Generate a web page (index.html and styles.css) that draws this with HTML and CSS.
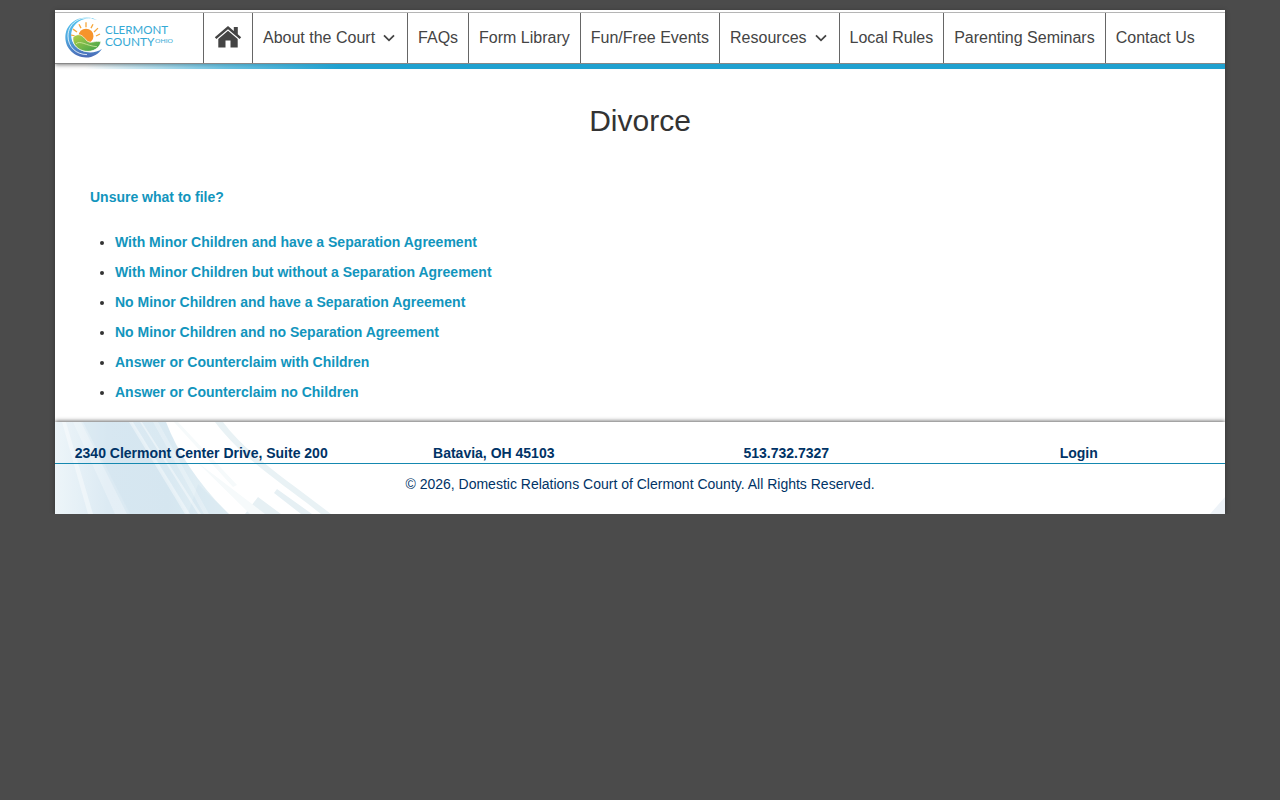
FILE: index.html
```html
<!DOCTYPE html>
<html lang="en">
<head>
  <meta charset="utf-8">
  <title>Divorce</title>
  <link rel="stylesheet" href="styles.css">
</head>
<body>
  <div class="container">
    <div class="header">
      <ul class="menu">
        <li class="logo">
          <a href="#">
            <svg width="110" height="44" viewBox="0 0 110 44">
              <defs>
                <linearGradient id="ring" x1="0" y1="0" x2="0" y2="1">
                  <stop offset="0" stop-color="#55c4ee"/>
                  <stop offset=".55" stop-color="#4fa6de"/>
                  <stop offset="1" stop-color="#4b69b5"/>
                </linearGradient>
                <linearGradient id="hill" x1="0" y1="0" x2="1" y2="1">
                  <stop offset="0" stop-color="#b5cf45"/>
                  <stop offset="1" stop-color="#38a04c"/>
                </linearGradient>
              </defs>
              <g transform="translate(0 -.6) scale(1 .98)">
                <path fill="url(#ring)" d="M34 6C25-1 8 1 2 14C-4 29 7 43 21 43C28 43 34 39 37 34C29 40 17 39 10 31C3 22 6 10 16 5C22 2 29 3 34 6z"/>
                <path fill="none" stroke="#fff" stroke-width=".8" d="M27 3.500C14 0 3 9 3 21C3 32 11 40 22 40"/>
                <path fill="none" stroke="#f6a63a" stroke-width="1.300" d="M21 12V7M16 13L14 9M12 17L8 14M10 21L6 20M26 13L28 9M29 17L33 13M31 21L35 19"/>
                <circle cx="21" cy="21" r="7.500" fill="#f7942b"/>
                <path fill="url(#hill)" stroke="#fff" stroke-width=".7" d="M8 22C14 17 18 21 21 25C25 30 30 25 36 27C34 36 24 38 18 36C11 34 7 28 8 22z"/>
                <path fill="none" stroke="#d8e9a5" stroke-width=".8" d="M11 29C15 25 21 31 32 32"/>
              </g>
              <text class="logo-text" x="40" y="18.200" textLength="63" lengthAdjust="spacingAndGlyphs">CLERMONT</text>
              <text class="logo-text" x="40" y="29.500" textLength="49.500" lengthAdjust="spacingAndGlyphs">COUNTY</text>
              <text class="logo-small" x="90" y="26.800" textLength="18" lengthAdjust="spacingAndGlyphs">OHIO</text>
            </svg>
          </a>
        </li>
        <li class="home">
          <a href="#">
            <svg width="28" height="24" viewBox="0 0 28 24">
              <path d="M14 1L.8 12.200L2.400 14L14 4.200L25.600 14L27.200 12.200L23.800 9.300V2H19.800V5.900z"/>
              <path d="M14 5.700L4.300 13.900V22.500H11.500V15.500H16.500V22.500H23.700V13.900z"/>
            </svg>
          </a>
        </li>
        <li><a href="#">About the Court <svg class="arrow" width="12" height="8" viewBox="0 0 12 8"><path d="M1 1.300L6 6.300L11 1.300"/></svg></a></li>
        <li><a href="#">FAQs</a></li>
        <li><a href="#">Form Library</a></li>
        <li><a href="#">Fun/Free Events</a></li>
        <li><a href="#">Resources <svg class="arrow" width="12" height="8" viewBox="0 0 12 8"><path d="M1 1.300L6 6.300L11 1.300"/></svg></a></li>
        <li><a href="#">Local Rules</a></li>
        <li><a href="#">Parenting Seminars</a></li>
        <li><a href="#">Contact Us</a></li>
      </ul>
    </div>
    <div class="bluebar"></div>

    <div class="content">
      <h1>Divorce</h1>
      <p><a href="#">Unsure what to file?</a></p>
      <ul class="forms">
        <li><a href="#">With Minor Children and have a Separation Agreement</a></li>
        <li><a href="#">With Minor Children but without a Separation Agreement</a></li>
        <li><a href="#">No Minor Children and have a Separation Agreement</a></li>
        <li><a href="#">No Minor Children and no Separation Agreement</a></li>
        <li><a href="#">Answer or Counterclaim with Children</a></li>
        <li><a href="#">Answer or Counterclaim no Children</a></li>
      </ul>
    </div>

    <div class="footer">
      <svg class="footer-bg" width="1170" height="92" viewBox="0 0 1170 92">
        <defs>
          <linearGradient id="wash" x1="0" y1="0" x2="1" y2="0">
            <stop offset="0" stop-color="#edf5f9"/>
            <stop offset=".3" stop-color="#dceaf3"/>
            <stop offset=".65" stop-color="#d9e9f2"/>
            <stop offset="1" stop-color="#e6f1f5"/>
          </linearGradient>
        </defs>
        <path fill="url(#wash)" d="M0 0H111C123 31 145 64 174 92H0z"/>
        <path fill="#cfe3ee" opacity=".35" d="M28 0H76L132 92H75zM143 62L174 92H133z"/>
        <path fill="#fff" opacity=".4" d="M7 0H11L38 92H33zM74 0H78L135 92H130zM85 0H87L146 92H143z"/>
        <path fill="#fff" opacity=".25" d="M18 0H26L72 92H60zM98 0H103L154 92H149z"/>
        <path fill="#e9f2f5" d="M160 0H168C190 30 228 55 276 92H266C225 60 188 37 160 0z"/>
        <path fill="#e6f0f4" d="M190 92L203 75L226 92zM219 71L222 67L257 92H246z"/>
        <path fill="#f6fafb" d="M119 0H123L182 63L178 65zM142 40L195 92H210z"/>
        <path fill="#eef3f8" d="M1155 92L1170 75V92z"/>
      </svg>
      <div class="address">
        <div>2340 Clermont Center Drive, Suite 200</div>
        <div>Batavia, OH 45103</div>
        <div>513.732.7327</div>
        <div><a href="#">Login</a></div>
      </div>
      <div class="copyright">&copy; 2026, Domestic Relations Court of Clermont County. All Rights Reserved.</div>
    </div>
  </div>
</body>
</html>
```

FILE: styles.css
```css
* { box-sizing: border-box; }

body {
  margin: 0;
  padding-top: 10px;
  background: #4b4b4b;
  color: #333;
  font-family: "Liberation Sans", Arial, Helvetica, sans-serif;
  font-size: 14px;
  line-height: 20px;
}

a { text-decoration: none; }

.container {
  width: 1170px;
  margin: 0 auto;
  background: #fff;
  box-shadow: 0 1px 5px rgba(0, 0, 0, .3);
}

/* top menu */
.header {
  position: relative;
  padding-top: 2px;
  background: #fff;
  box-shadow: 0 1px 4px rgba(0, 0, 0, .5);
  clip-path: inset(0 0 -6px 0);
}
.menu {
  display: flex;
  height: 52px;
  margin: 0;
  padding: 0;
  list-style: none;
  border-top: 1px solid #b5b5b5;
  border-bottom: 1px solid #888;
}
.menu li { border-right: 1px solid #666; }
.menu li:last-child { border-right: 0; }
.menu a {
  display: flex;
  align-items: center;
  height: 100%;
  padding: 0 10px;
  color: #444;
  font-size: 16px;
  white-space: nowrap;
}
.menu .logo { width: 149px; }
.menu .home a { padding-bottom: 2px; }
.home svg { fill: #444; }
.arrow {
  margin: 0 2px 0 8px;
  fill: none;
  stroke: #444;
  stroke-width: 1.8;
}
.logo-text { font-family: Lato, sans-serif; font-size: 11px; fill: #35a9d5; }
.logo-small { font-family: Lato, sans-serif; font-size: 6.5px; fill: #35a9d5; }

.bluebar {
  position: relative;
  height: 5px;
  background: linear-gradient(to right, rgba(31, 161, 208, 0) 30px, rgba(31, 161, 208, .65) 170px, #1fa1d0 285px);
}

.content {
  height: 353px;
  padding: 32px 35px 0;
}
h1 {
  margin: 0;
  font-size: 30px;
  font-weight: normal;
  line-height: 40px;
  text-align: center;
}
.content p { margin: 46px 0 25px; }
.content a { color: #1295bd; font-weight: bold; }
.forms { margin: 0; padding: 0 0 0 25px; }
.forms li { margin-bottom: 10px; }

/* footer */
.footer {
  position: relative;
  height: 92px;
  padding-top: 21px;
  background: #fff;
  color: #003366;
  box-shadow: 0 -1px 4px rgba(0, 0, 0, .6);
  clip-path: inset(-6px 0 0 0);
}
.footer-bg { position: absolute; top: 0; left: 0; }
.address {
  position: relative;
  display: grid;
  grid-template-columns: repeat(4, 1fr);
  border-bottom: 1px solid #1588b0;
  font-weight: bold;
  text-align: center;
}
.address a { color: #003366; }
.copyright { position: relative; margin-top: 10px; text-align: center; }
```
